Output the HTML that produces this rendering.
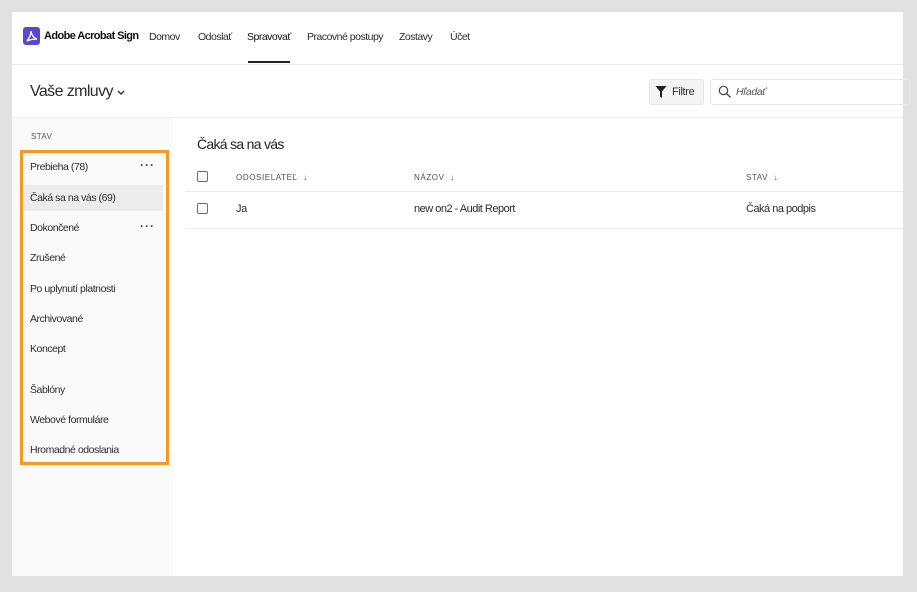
<!DOCTYPE html>
<html><head><meta charset="utf-8"><style>
*{margin:0;padding:0;box-sizing:border-box}
body{width:917px;height:592px;background:#e1e1e1;font-family:"Liberation Sans",sans-serif;color:#2c2c2c;position:relative;overflow:hidden;font-size:10.5px;letter-spacing:-0.35px}
.a{position:absolute;white-space:nowrap}
#page{position:absolute;left:12px;top:12px;width:891px;height:564px;background:#fff}
.nav{font-size:10.5px;letter-spacing:-0.5px}
.side{position:absolute;left:0;top:106px;width:161px;height:458px;background:#fafafa}
.it{position:absolute;left:18px;font-size:10.5px;letter-spacing:-0.45px}
.dots{position:absolute;left:128px;font-size:12px;letter-spacing:1px;font-weight:bold;color:#444}
.cb{position:absolute;width:11px;height:11px;border:1.5px solid #6e6e6e;border-radius:2px}
.th{font-size:8px;letter-spacing:0.6px;color:#505050}
</style></head><body>
<div id="page">
 <div class="a" style="left:11px;top:15px;width:17px;height:18px;background:#5b48c9;border-radius:3px">
  <svg width="17" height="18" viewBox="0 0 17 18"><path d="M4 14 C7 10 8 6 8 4 C8 6 10 11 14 12 C10 12 6 13 4 14Z" fill="none" stroke="#fff" stroke-width="1.3"/></svg>
 </div>
 <div class="a" style="left:32px;top:18px;font-size:11px;font-weight:bold;color:#111;letter-spacing:-0.6px">Adobe Acrobat Sign</div>
 <div class="a nav" style="left:137px;top:19px">Domov</div>
 <div class="a nav" style="left:186px;top:19px">Odoslať</div>
 <div class="a nav" style="left:235px;top:19px;color:#111">Spravovať</div>
 <div class="a" style="left:236px;top:49px;width:42px;height:2px;background:#222"></div>
 <div class="a nav" style="left:295px;top:19px">Pracovné postupy</div>
 <div class="a nav" style="left:387px;top:19px">Zostavy</div>
 <div class="a nav" style="left:438px;top:19px">Účet</div>
 <div class="a" style="left:0;top:52px;width:891px;height:1px;background:#ebebeb"></div>
 <div class="a" style="left:18px;top:71px;font-size:16px;color:#2c2c2c;letter-spacing:-0.6px">Vaše zmluvy</div>
 <svg class="a" style="left:104px;top:77px" width="10" height="8" viewBox="0 0 10 8"><path d="M2 2 L5 5 L8 2" fill="none" stroke="#333" stroke-width="1.4"/></svg>
 <div class="a" style="left:637px;top:67px;width:55px;height:26px;background:#f4f4f4;border:1px solid #e6e6e6;border-radius:3px"></div>
 <svg class="a" style="left:643px;top:73px" width="12" height="14" viewBox="0 0 12 14"><path d="M0.5 1 H11.5 L7 6.5 V13 L5 11.5 V6.5Z" fill="#222"/></svg>
 <div class="a" style="left:660px;top:74px;font-size:11px">Filtre</div>
 <div class="a" style="left:698px;top:67px;width:200px;height:26px;border:1px solid #e6e6e6;border-radius:3px"></div>
 <svg class="a" style="left:706px;top:73px" width="14" height="14" viewBox="0 0 14 14"><circle cx="5.5" cy="5.5" r="4.2" fill="none" stroke="#444" stroke-width="1.2"/><path d="M8.6 8.6 L12.5 12.5" stroke="#444" stroke-width="1.3"/></svg>
 <div class="a" style="left:724px;top:74px;font-size:10.5px;font-style:italic;color:#555">Hľadať</div>
 <div class="a" style="left:0;top:105px;width:891px;height:1px;background:#f0f0f0"></div>
 <div class="side">
  <div class="a" style="left:19px;top:14px;font-size:8px;letter-spacing:0.4px;color:#555">STAV</div>
  <div class="a" style="left:10px;top:67px;width:141px;height:26px;background:#ececec"></div>
  <div class="it" style="top:43px">Prebieha (78)</div><div class="dots" style="top:40px">···</div>
  <div class="it" style="top:74px">Čaká sa na vás (69)</div>
  <div class="it" style="top:104px">Dokončené</div><div class="dots" style="top:101px">···</div>
  <div class="it" style="top:134px">Zrušené</div>
  <div class="it" style="top:165px">Po uplynutí platnosti</div>
  <div class="it" style="top:195px">Archivované</div>
  <div class="it" style="top:225px">Koncept</div>
  <div class="it" style="top:266px">Šablóny</div>
  <div class="it" style="top:296px">Webové formuláre</div>
  <div class="it" style="top:326px">Hromadné odoslania</div>
  <div class="a" style="left:8px;top:32px;width:149px;height:315px;border:3px solid #f39a24"></div>
 </div>
 <div class="a" style="left:185px;top:124px;font-size:14px;color:#222;letter-spacing:-0.7px">Čaká sa na vás</div>
 <div class="cb" style="left:185px;top:159px"></div>
 <div class="a th" style="left:224px;top:161px">ODOSIELATEĽ &nbsp;↓</div>
 <div class="a th" style="left:402px;top:161px">NÁZOV &nbsp;↓</div>
 <div class="a th" style="left:734px;top:161px">STAV &nbsp;↓</div>
 <div class="a" style="left:173px;top:179px;width:718px;height:1px;background:#ececec"></div>
 <div class="cb" style="left:185px;top:191px"></div>
 <div class="a" style="left:224px;top:191px;font-size:11px">Ja</div>
 <div class="a" style="left:402px;top:191px;font-size:11px;letter-spacing:-0.5px">new on2 - Audit Report</div>
 <div class="a" style="left:734px;top:191px;font-size:11px;letter-spacing:-0.5px">Čaká na podpis</div>
 <div class="a" style="left:173px;top:216px;width:718px;height:1px;background:#ececec"></div>
</div>
</body></html>
